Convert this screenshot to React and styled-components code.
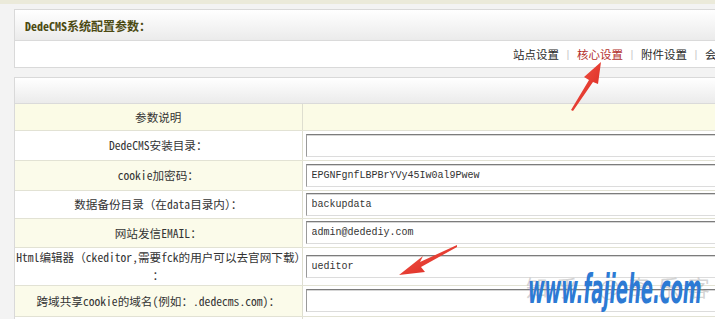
import React from 'react';
import styled, { createGlobalStyle } from 'styled-components';

const GlobalStyle = createGlobalStyle`
  html, body {
    margin: 0;
    padding: 0;
    overflow: hidden;
    background: #f3f3f3;
  }
`;

const CJK = `"Noto Sans Mono CJK SC", "Liberation Mono", "Noto Sans CJK SC", monospace`;

const Page = styled.div`
  position: relative;
  height: 319px;
  overflow: hidden;
  box-sizing: border-box;
  border-top: 4px solid #ebeada;
  padding: 5px 0 0 14px;
  background: #f3f3f3;
  font-family: ${CJK};
`;

const Panel = styled.div`
  width: 760px;
  background: #fff;
  border: 1px solid #d9d9d9;
  margin-bottom: 9px;
`;

const PanelHead = styled.div`
  height: ${p => p.$h}px;
  display: flex;
  align-items: center;
  padding-left: 10px;
  background: linear-gradient(#ffffff, #ebebeb);
  border-bottom: 1px solid #dadada;
`;

const Title = styled.h3`
  margin: 0;
  font-size: 12px;
  font-weight: bold;
  color: #4c4a12;
  font-family: ${CJK};
`;

const TabBar = styled.div`
  height: 26px;
  display: flex;
  align-items: center;
  padding-left: 498px;
  white-space: nowrap;
`;

const Tab = styled.span`
  flex-shrink: 0;
  font-size: 11.5px;
  font-family: "Noto Sans CJK SC", sans-serif;
  color: ${p => (p.$active ? '#b3302c' : '#2a2a2a')};
`;

const Sep = styled.span`
  flex-shrink: 0;
  width: 18px;
  text-align: center;
  font-size: 11px;
  color: #c8c8c8;
  font-family: "Liberation Sans", sans-serif;
`;

const Table = styled.table`
  width: 100%;
  border-collapse: collapse;
  table-layout: fixed;
`;

const Row = styled.tr`
  height: ${p => p.$h}px;
  background: ${p => (p.$head ? '#fbfbe6' : 'transparent')};
`;

const Label = styled.td`
  width: 287px;
  box-sizing: border-box;
  padding: 0;
  text-align: center;
  font-size: 11.6px;
  line-height: 18px;
  line-break: anywhere;
  color: #333;
  background: ${p => (p.$tint ? '#fbfbea' : 'transparent')};
  border-right: 1px solid #deded0;
  border-bottom: 1px solid #e2e2d4;
`;

const Field = styled.td`
  padding: 0 0 0 3px;
  border-bottom: 1px solid #e2e2d4;
`;

const Input = styled.input`
  display: block;
  width: 440px;
  height: 23px;
  box-sizing: border-box;
  padding: 0 5px;
  border: 1px solid #dcdcdc;
  border-top-color: #7c7c7c;
  border-left-color: #9a9a9a;
  box-shadow: inset 0 1px 0 #d6d6d6;
  background: #fff;
  font-family: "Liberation Mono", monospace;
  font-size: 10px;
  color: #333;
  outline: none;
`;

const Overlay = styled.svg`
  position: absolute;
  left: 0;
  top: 0;
  pointer-events: none;
`;

const Watermark = styled.div`
  position: absolute;
  left: 528px;
  top: 266px;
  pointer-events: none;
`;

const Zhihu = styled.span`
  position: absolute;
  left: -2px;
  top: 0;
  white-space: nowrap;
  letter-spacing: 8px;
  font-family: "Noto Sans CJK SC", sans-serif;
  font-size: 22px;
  color: rgba(160, 160, 160, 0.45);
`;

const Site = styled.span`
  position: absolute;
  left: 0;
  top: -4px;
  white-space: nowrap;
  font-family: "DejaVu Sans Condensed", "DejaVu Sans", sans-serif;
  font-weight: bold;
  font-style: italic;
  font-size: 40px;
  color: #2c7ad4;
  transform: scaleX(0.5);
  transform-origin: left top;
`;

const tabs = ['站点设置', '核心设置', '附件设置', '会员设置', '互动设置'];

const rows = [
  { label: 'DedeCMS安装目录：', value: '', h: 30 },
  { label: 'cookie加密码：', value: 'EPGNFgnfLBPBrYVy45Iw0al9Pwew', h: 30, tint: true },
  { label: '数据备份目录（在data目录内）：', value: 'backupdata', h: 28 },
  { label: '网站发信EMAIL：', value: 'admin@dedediy.com', h: 29, tint: true },
  { label: 'Html编辑器（ckeditor,需要fck的用户可以去官网下载）：', value: 'ueditor', h: 38 },
  { label: '跨域共享cookie的域名(例如：.dedecms.com)：', value: '', h: 31, tint: true },
  { label: '', value: '', h: 31 },
];

export default function App() {
  return (
    <>
      <GlobalStyle />
      <Page>
        <Panel>
          <PanelHead $h={30}>
            <Title>DedeCMS系统配置参数：</Title>
          </PanelHead>
          <TabBar>
            {tabs.map((t, i) => (
              <React.Fragment key={t}>
                {i > 0 && <Sep>|</Sep>}
                <Tab $active={i === 1}>{t}</Tab>
              </React.Fragment>
            ))}
          </TabBar>
        </Panel>
        <Panel>
          <PanelHead $h={25} />
          <Table>
            <tbody>
              <Row $h={26} $head>
                <Label>参数说明</Label>
                <Field />
              </Row>
              {rows.map((r, i) => (
                <Row key={i} $h={r.h}>
                  <Label $tint={r.tint}>{r.label}</Label>
                  <Field>
                    <Input readOnly value={r.value} />
                  </Field>
                </Row>
              ))}
            </tbody>
          </Table>
        </Panel>

        <Watermark>
          <Zhihu>知乎 @奇乐客</Zhihu>
          <Site>www.fajiehe.com</Site>
        </Watermark>

        <Overlay width="715" height="319" viewBox="0 0 715 319">
          <defs>
            <linearGradient id="arr" x1="0" y1="0" x2="1" y2="1">
              <stop offset="0" stopColor="#f45a4a" />
              <stop offset="1" stopColor="#d8231d" />
            </linearGradient>
          </defs>
          <path d="M571 106 L589 76 L584 73 L601 58 L598 80 L593 78 L573 107 Z" fill="url(#arr)" />
          <path d="M457 241 L420 258 L423 252 L399 271 L425 268 L421 263 L457 243 Z" fill="url(#arr)" />
        </Overlay>
      </Page>
    </>
  );
}
